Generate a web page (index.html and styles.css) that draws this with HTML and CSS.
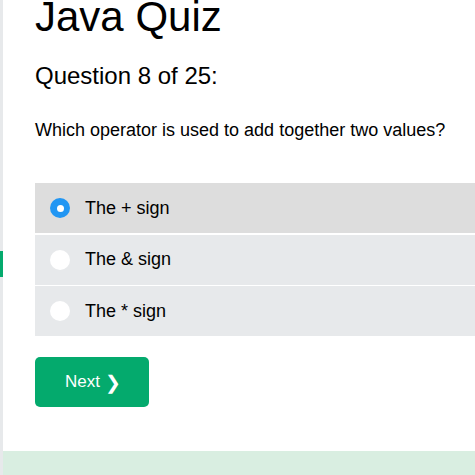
FILE: index.html
```html
<!DOCTYPE html>
<html lang="en">
<head>
<meta charset="utf-8">
<title>Java Quiz</title>
<link rel="stylesheet" href="styles.css">
</head>
<body>
<div class="page">
  <div class="sidebar"><div class="marker"></div></div>
  <div class="main">
    <div class="content">
      <h1 class="title">Java Quiz</h1>
      <h2 class="qnum">Question 8 of 25:</h2>
      <p class="question">Which operator is used to add together two values?</p>
      <div class="options">
        <div class="option selected"><span class="radio"></span><span class="label">The + sign</span></div>
        <div class="option"><span class="radio"></span><span class="label">The &amp; sign</span></div>
        <div class="option"><span class="radio"></span><span class="label">The * sign</span></div>
      </div>
      <button class="next">Next <span class="chev">&#10095;</span></button>
    </div>
    <div class="footer"></div>
  </div>
</div>
</body>
</html>
```
FILE: styles.css
```css
html, body {
  margin: 0;
  padding: 0;
  background: #fff;
  overflow: hidden;
}
body {
  font-family: "Liberation Sans", Arial, sans-serif;
  color: #000;
}
.page {
  display: flex;
  min-height: 475px;
}
.sidebar {
  width: 3px;
  flex: none;
  background: #e7e9eb;
}
.marker {
  margin-top: 251px;
  height: 26px;
  background: #04aa6d;
}
.main {
  flex: 1;
  display: flex;
  flex-direction: column;
  min-width: 0;
}
.content {
  padding-left: 32px;
}
.title {
  margin: 0;
  font-size: 42px;
  line-height: 34px;
  font-weight: normal;
}
.qnum {
  margin: 30px 0 0;
  font-size: 24px;
  line-height: 24px;
  font-weight: normal;
}
.question {
  margin: 33px 0 0;
  font-size: 18px;
  line-height: 18px;
}
.options {
  margin-top: 44px;
  display: flex;
  flex-direction: column;
  gap: 1.5px;
}
.option {
  height: 50px;
  background: #e7e9eb;
  display: flex;
  align-items: center;
  padding-left: 15px;
  gap: 15px;
  font-size: 18px;
}
.option.selected {
  background: #dddddd;
}
.radio {
  width: 20px;
  height: 20px;
  border-radius: 50%;
  background: #fff;
  flex: none;
  display: flex;
  align-items: center;
  justify-content: center;
}
.selected .radio {
  background: #2196f3;
}
.selected .radio::after {
  content: "";
  width: 7px;
  height: 7px;
  border-radius: 50%;
  background: #fff;
}
.next {
  margin-top: 21px;
  height: 50px;
  width: 114px;
  padding: 0 0 0 2px;
  border: none;
  border-radius: 5px;
  background: #04aa6d;
  color: #fff;
  font-family: "Liberation Sans", Arial, sans-serif;
  font-size: 17px;
  display: flex;
  align-items: center;
  justify-content: center;
}
.chev {
  font-family: "DejaVu Sans", sans-serif;
  font-size: 19px;
  margin-left: 5px;
}
.footer {
  margin-top: 44px;
  height: 40px;
  background: #d9eee1;
}
```
